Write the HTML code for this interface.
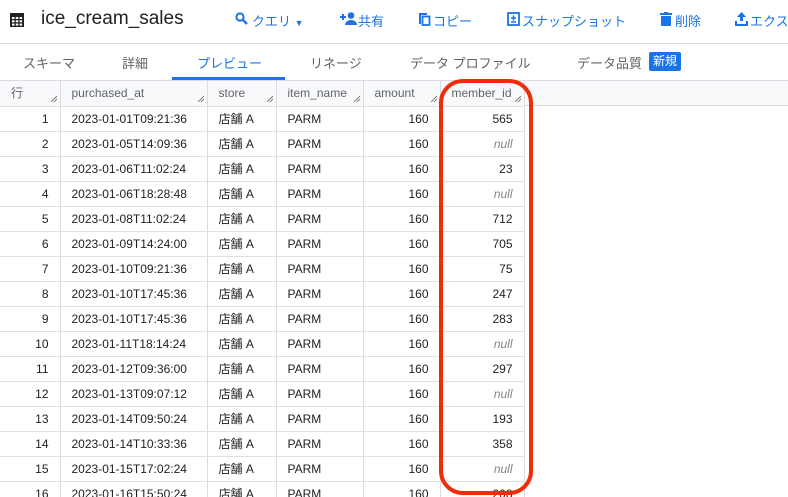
<!DOCTYPE html>
<html><head><meta charset="utf-8"><style>
*{margin:0;padding:0;box-sizing:border-box}
html,body{width:788px;height:497px;overflow:hidden}
body{background:#fff;font-family:"Liberation Sans","Noto Sans CJK JP",sans-serif;position:relative;color:#202124}
.a{position:absolute;white-space:nowrap}
.btn{color:#1a73e8;font-size:13px;top:11px}
.tab{font-size:13px;color:#5f6368;top:53px}
table{position:absolute;left:0;top:81px;border-collapse:collapse;font-size:12px;table-layout:fixed}
td,th{height:25px;border-right:1px solid #dadce0;border-bottom:1px solid #e0e0e0;padding:0 11px;white-space:nowrap;line-height:14px}
th{background:#f8f9fa;font-weight:normal;color:#5f6368;text-align:left;position:relative;border-right:1px solid #dadce0}
th:after{content:"";position:absolute;right:3px;bottom:4px;width:6px;height:6px;background:linear-gradient(135deg,transparent 45%,#777 46%,#777 54%,transparent 55%,transparent 70%,#777 71%,#777 79%,transparent 80%)}
.r{text-align:right}
.n{color:#80868b;font-style:italic}
</style></head><body>
<svg class="a" style="left:10px;top:13px" width="14" height="14" viewBox="0 0 14 14"><rect x="0" y="0" width="14" height="14" fill="#202124"/><g fill="#fff"><rect x="2" y="4" width="2.5" height="2"/><rect x="5.8" y="4" width="2.5" height="2"/><rect x="9.6" y="4" width="2.5" height="2"/><rect x="2" y="7.3" width="2.5" height="2"/><rect x="5.8" y="7.3" width="2.5" height="2"/><rect x="9.6" y="7.3" width="2.5" height="2"/><rect x="2" y="10.6" width="2.5" height="2"/><rect x="5.8" y="10.6" width="2.5" height="2"/><rect x="9.6" y="10.6" width="2.5" height="2"/></g></svg>
<div class="a" style="left:41px;top:8px;font-size:19px">ice_cream_sales</div>
<svg class="a" style="left:235px;top:12px" width="13" height="13" viewBox="0 0 13 13"><circle cx="5" cy="5" r="3.6" stroke="#1a73e8" stroke-width="2" fill="none"/><path d="M7.5 7.5L12 12" stroke="#1a73e8" stroke-width="2.4"/></svg>
<div class="a btn" style="left:252px">クエリ <span style="font-size:9px">▼</span></div>
<svg class="a" style="left:340px;top:12px" width="17" height="13" viewBox="0 0 17 13"><path d="M0 5h6M3 2v6" stroke="#1a73e8" stroke-width="2"/><circle cx="11" cy="3.5" r="3.3" fill="#1a73e8"/><path d="M5 13c0-3 3-5 6-5s6 2 6 5z" fill="#1a73e8"/></svg>
<div class="a btn" style="left:358px">共有</div>
<svg class="a" style="left:418px;top:12px" width="13" height="14" viewBox="0 0 13 14"><path d="M1 1h8v2H3v9H1z" fill="#1a73e8"/><rect x="4.5" y="4.5" width="7" height="8.5" fill="none" stroke="#1a73e8" stroke-width="1.8"/></svg>
<div class="a btn" style="left:433px">コピー</div>
<svg class="a" style="left:507px;top:12px" width="13" height="14" viewBox="0 0 13 14"><rect x="1" y="1" width="11" height="12" fill="none" stroke="#1a73e8" stroke-width="1.8"/><path d="M6.5 3.5v5M4 6h5M4 10h5" stroke="#1a73e8" stroke-width="1.6"/></svg>
<div class="a btn" style="left:522px">スナップショット</div>
<svg class="a" style="left:660px;top:12px" width="12" height="14" viewBox="0 0 12 14"><rect x="0" y="1" width="12" height="2" fill="#1a73e8"/><rect x="4" y="0" width="4" height="2" fill="#1a73e8"/><path d="M1 4h10v9c0 .6-.4 1-1 1H2c-.6 0-1-.4-1-1z" fill="#1a73e8"/></svg>
<div class="a btn" style="left:675px">削除</div>
<svg class="a" style="left:735px;top:12px" width="13" height="14" viewBox="0 0 13 14"><path d="M6.5 0L11 5H8v4H5V5H2z" fill="#1a73e8"/><path d="M0 9h2v3h9V9h2v5H0z" fill="#1a73e8"/></svg>
<div class="a btn" style="left:750px">エクス</div>
<div class="a" style="left:0;top:43px;width:788px;height:1px;background:#dadce0"></div>
<div class="a tab" style="left:23px">スキーマ</div>
<div class="a tab" style="left:122px">詳細</div>
<div class="a tab" style="left:197px;color:#1a73e8">プレビュー</div>
<div class="a" style="left:172px;top:77px;width:113px;height:3px;background:#1a73e8"></div>
<div class="a tab" style="left:310px">リネージ</div>
<div class="a tab" style="left:410px">データ プロファイル</div>
<div class="a tab" style="left:577px">データ品質</div>
<div class="a" style="left:649px;top:52px;width:32px;height:19px;background:#1a73e8;color:#fff;font-size:12px;border-radius:2px;text-align:center;line-height:19px">新規</div>
<div class="a" style="left:0;top:80px;width:788px;height:26px;background:#f8f9fa;border-top:1px solid #dadce0;border-bottom:1px solid #dadce0"></div>
<table>
<colgroup><col style="width:60px"><col style="width:147px"><col style="width:69px"><col style="width:87px"><col style="width:77px"><col style="width:84px"></colgroup>
<tr><th>行</th><th>purchased_at</th><th>store</th><th>item_name</th><th>amount</th><th>member_id</th></tr>
<tr><td class="r">1</td><td>2023-01-01T09:21:36</td><td>店舗 A</td><td>PARM</td><td class="r">160</td><td class="r">565</td></tr>
<tr><td class="r">2</td><td>2023-01-05T14:09:36</td><td>店舗 A</td><td>PARM</td><td class="r">160</td><td class="r n">null</td></tr>
<tr><td class="r">3</td><td>2023-01-06T11:02:24</td><td>店舗 A</td><td>PARM</td><td class="r">160</td><td class="r">23</td></tr>
<tr><td class="r">4</td><td>2023-01-06T18:28:48</td><td>店舗 A</td><td>PARM</td><td class="r">160</td><td class="r n">null</td></tr>
<tr><td class="r">5</td><td>2023-01-08T11:02:24</td><td>店舗 A</td><td>PARM</td><td class="r">160</td><td class="r">712</td></tr>
<tr><td class="r">6</td><td>2023-01-09T14:24:00</td><td>店舗 A</td><td>PARM</td><td class="r">160</td><td class="r">705</td></tr>
<tr><td class="r">7</td><td>2023-01-10T09:21:36</td><td>店舗 A</td><td>PARM</td><td class="r">160</td><td class="r">75</td></tr>
<tr><td class="r">8</td><td>2023-01-10T17:45:36</td><td>店舗 A</td><td>PARM</td><td class="r">160</td><td class="r">247</td></tr>
<tr><td class="r">9</td><td>2023-01-10T17:45:36</td><td>店舗 A</td><td>PARM</td><td class="r">160</td><td class="r">283</td></tr>
<tr><td class="r">10</td><td>2023-01-11T18:14:24</td><td>店舗 A</td><td>PARM</td><td class="r">160</td><td class="r n">null</td></tr>
<tr><td class="r">11</td><td>2023-01-12T09:36:00</td><td>店舗 A</td><td>PARM</td><td class="r">160</td><td class="r">297</td></tr>
<tr><td class="r">12</td><td>2023-01-13T09:07:12</td><td>店舗 A</td><td>PARM</td><td class="r">160</td><td class="r n">null</td></tr>
<tr><td class="r">13</td><td>2023-01-14T09:50:24</td><td>店舗 A</td><td>PARM</td><td class="r">160</td><td class="r">193</td></tr>
<tr><td class="r">14</td><td>2023-01-14T10:33:36</td><td>店舗 A</td><td>PARM</td><td class="r">160</td><td class="r">358</td></tr>
<tr><td class="r">15</td><td>2023-01-15T17:02:24</td><td>店舗 A</td><td>PARM</td><td class="r">160</td><td class="r n">null</td></tr>
<tr><td class="r">16</td><td>2023-01-16T15:50:24</td><td>店舗 A</td><td>PARM</td><td class="r">160</td><td class="r">208</td></tr>
</table>
<div class="a" style="left:439px;top:79px;width:94px;height:416px;border:4px solid #f02d0a;border-radius:24px"></div>
</body></html>
